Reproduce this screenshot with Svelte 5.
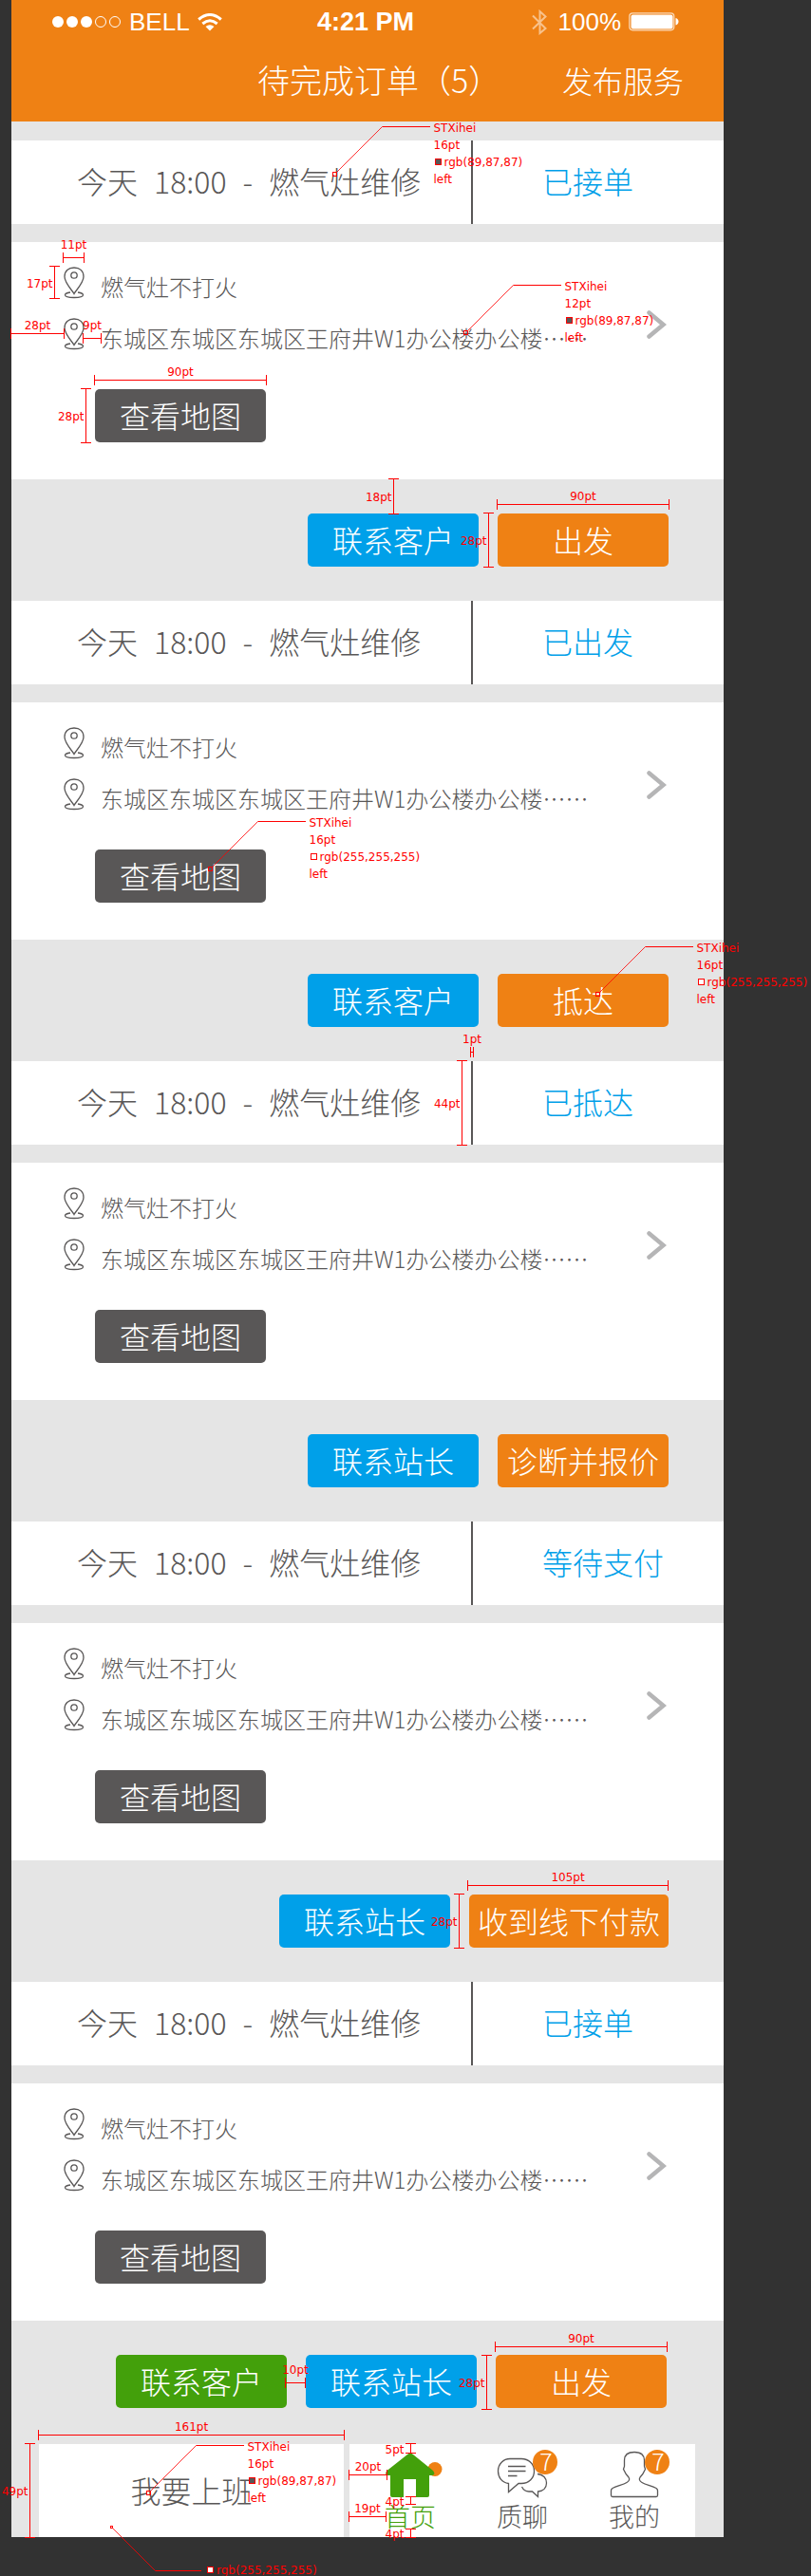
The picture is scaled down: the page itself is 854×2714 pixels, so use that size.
<script>
  const orders = [
    { status: '已接单', actions: [['联系客户', 'blue'], ['出发', 'orange']] },
    { status: '已出发', actions: [['联系客户', 'blue'], ['抵达', 'orange']] },
    { status: '已抵达', actions: [['联系站长', 'blue'], ['诊断并报价', 'orange']] },
    { status: '等待支付', actions: [['联系站长', 'blue'], ['收到线下付款', 'orange wide']] },
    { status: '已接单', actions: [['联系客户', 'green'], ['联系站长', 'blue'], ['出发', 'orange']] }
  ];

  // Horizontal dimensions: start x, end x, y, label
  const spans = [
    [66.5, 88.5, 271.5, '11pt'],
    [11.5, 67.5, 351.5, '28pt'],
    [87.5, 106.5, 356.5, '9pt'],
    [99.5, 280.5, 400.5, '90pt'],
    [523.5, 704.5, 531.5, '90pt'],
    [495.5, 498.5, 1108.5, '1pt'],
    [492.5, 703.5, 1986.5, '105pt'],
    [300.5, 321.5, 2510.5, '10pt'],
    [521.5, 702.5, 2472.5, '90pt'],
    [40.5, 362.5, 2565.5, '161pt'],
    [367.5, 407.5, 2607.5, '20pt'],
    [367.5, 406.5, 2651.5, '19pt']
  ];

  // Vertical dimensions: x, start y, end y, label
  const heights = [
    [57.5, 280.5, 314.5, '17pt'],
    [90.5, 409.5, 466.5, '28pt'],
    [414.5, 504.5, 541.5, '18pt'],
    [514.5, 540.5, 597.5, '28pt'],
    [486.5, 1117.5, 1206.5, '44pt'],
    [483.5, 1995.5, 2052.5, '28pt'],
    [512.5, 2481.5, 2538.5, '28pt'],
    [31.5, 2574.5, 2673.5, '49pt'],
    [432.5, 2574.5, 2584.5, '5pt'],
    [432.5, 2630.5, 2638.5, '4pt'],
    [432.5, 2664.5, 2673.5, '4pt']
  ];

  // Type notes: elbow x, elbow y, size, swatch values
  const notes = [
    [402.5, 133.5, '16pt', '89,87,87'],
    [540.5, 300.5, '12pt', '89,87,87'],
    [271.5, 865.5, '16pt', '255,255,255'],
    [679.5, 997.5, '16pt', '255,255,255'],
    [206.5, 2576.5, '16pt', '89,87,87']
  ];
</script>

{#snippet pin()}
  <svg class="pin" width="22" height="34" viewBox="0 0 22 34" aria-hidden="true">
    <path d="M11 28.500C9.500 25.500 1 17 1 10.500C1 4.500 5 1 11 1S21 4.500 21 10.500C21 17 12.500 25.500 11 28.500Z" />
    <circle cx="11" cy="9" r="3.200" />
    <path d="M7 27C4 27.500 1.500 28.500 1.500 29.800C1.500 31.500 5.500 32.500 11 32.500S20.500 31.500 20.500 29.800C20.500 28.500 18 27.500 15 27" />
  </svg>
{/snippet}

<div class="board" lang="zh-CN">
  <main class="phone">
    <header>
      <div class="statusbar">
        <div class="carrier">
          <svg width="73" height="14" viewBox="0 0 73 14" aria-hidden="true">
            <circle cx="6" cy="7" r="6" fill="#fff" />
            <circle cx="21" cy="7" r="6" fill="#fff" />
            <circle cx="36" cy="7" r="6" fill="#fff" />
            <circle cx="51" cy="7" r="5.500" fill="none" stroke="#fff" />
            <circle cx="66" cy="7" r="5.500" fill="none" stroke="#fff" />
          </svg>
          <span>BELL</span>
          <svg width="26" height="19" viewBox="0 0 26 19" fill="none" stroke="#fff" stroke-width="3" aria-hidden="true">
            <path d="M1.200 6.500Q13 -3.500 24.800 6.500" />
            <path d="M5.300 11Q13 4.500 20.700 11" />
            <path d="M13 18.500L8.500 14Q13 10.500 17.500 14Z" fill="#fff" stroke="none" />
          </svg>
        </div>
        <strong>4:21 PM</strong>
        <div class="power">
          <svg width="16" height="27" viewBox="0 0 16 27" fill="none" stroke="#f8c28c" stroke-width="2" aria-hidden="true">
            <path d="M1 6.500L14.500 20L8.500 25V2L14.500 7.500L1 20.500" />
          </svg>
          <span>100%</span>
          <svg width="53" height="20" viewBox="0 0 53 20" aria-hidden="true">
            <rect x="0.800" y="0.800" width="47" height="18" rx="3.500" fill="none" stroke="#fbdcbd" stroke-width="1.200" />
            <rect x="2.500" y="2.500" width="44" height="15" rx="2" fill="#fff" />
            <path d="M49.500 6Q52.500 7 52.500 9.800T49.500 13.500Z" fill="#fff" />
          </svg>
        </div>
      </div>
      <div class="titlebar">
        <h1>待完成订单（5）</h1>
        <a href="#publish">发布服务</a>
      </div>
    </header>

    {#each orders as order}
      <article>
        <div class="head">
          <h2><span>今天</span><span>18:00</span><span>-</span><span>燃气灶维修</span></h2>
          <p>{order.status}</p>
        </div>
        <div class="card">
          <div class="details">
            <p>{@render pin()}<span>燃气灶不打火</span></p>
            <p>{@render pin()}<span>东城区东城区东城区王府井W1办公楼办公楼……</span></p>
            <button class="dark">查看地图</button>
          </div>
          <a class="more" href="#detail" aria-label="订单详情">
            <svg width="21" height="30" viewBox="0 0 21 30" aria-hidden="true">
              <path d="M2.500 2.500L17.500 15L2.500 27.500" fill="none" stroke="#b5b5b6" stroke-width="4.500" stroke-linecap="round" />
            </svg>
          </a>
        </div>
        <div class="actions" class:triple={order.actions.length === 3}>
          {#each order.actions as [label, tone]}
            <button class={tone}>{label}</button>
          {/each}
        </div>
      </article>
    {/each}

    <footer>
      <button class="shift">我要上班</button>
      <nav>
        <a class="current" href="#home">
          <svg width="80" height="60" viewBox="0 0 80 60" aria-hidden="true">
            <circle cx="66" cy="26.500" r="7.500" fill="#ef8114" />
            <path d="M37 11Q40 8.500 43 11L64 28Q67 32 63.500 33H60V54Q60 56 58 56H46V37H33V56H21Q19 56 19 54V33H16Q12.500 32 15.500 28Z" fill="#43a00b" />
          </svg>
          <span>首页</span>
        </a>
        <a href="#chat">
          <svg class="line" width="80" height="60" viewBox="0 0 80 60" aria-hidden="true">
            <path d="M27 15.500H39C47 15.500 52.500 21 52.500 28.500C52.500 36 47 41.500 39 41.500H36L25.500 50.500V41.500C18.500 40.500 14.500 35 14.500 28.500C14.500 21 20 15.500 27 15.500Z" />
            <path d="M25 23.500H43.500M25 28.500H43.500M25 33.500H34.500" />
            <path d="M56 31.500C62 32 65.500 36 65.500 41C65.500 46 62 49.500 56.500 50V55.500L50.500 50H47C43 50 41 48 39.500 45" />
            <circle class="badge" cx="64" cy="19" r="13" />
            <text x="65" y="28">7</text>
          </svg>
          <span>质聊</span>
        </a>
        <a href="#me">
          <svg class="line" width="80" height="60" viewBox="0 0 80 60" aria-hidden="true">
            <path d="M40 8.500C32 8.500 29.500 12 29.500 17V23.500L28.500 26.500C30 30 31 32 34 35Q36 38 32 40.500C28 43 22 44 17 46.500Q15.500 47.500 15.500 49V54Q15.500 55.500 17 55.500H63Q64.500 55.500 64.500 54V49Q64.500 47.500 63 46.500C58 44 52 43 48 40.500Q44 38 46 35C49 32 50 30 51.500 26.500L50.500 23.500V17C50.500 12 48 8.500 40 8.500Z" />
            <circle class="badge" cx="64" cy="19" r="13" />
            <text x="65" y="28">7</text>
          </svg>
          <span>我的</span>
        </a>
      </nav>
    </footer>
  </main>

  <svg class="specs">
    {#each spans as [x1, x2, y, label]}
      <path d="M{x1} {y}H{x2}M{x1} {y - 5.5}v11M{x2} {y - 5.5}v11" />
      <text x={(x1 + x2) / 2} y={y - (x2 - x1 < 25 ? 9.5 : 4.5)} text-anchor="middle">{label}</text>
    {/each}
    {#each heights as [x, y1, y2, label]}
      <path d="M{x} {y1}V{y2}M{x - 5.5} {y1}h11M{x - 5.5} {y2}h11" />
      <text x={x - (y2 - y1 < 25 ? 7 : 2)} y={(y1 + y2) / 2 + 5} text-anchor="end">{label}</text>
    {/each}
    {#each notes as [x, y, size, rgb]}
      <path d="M{x} {y}h50.5" />
      <path class="leader" d="M{x} {y}l-48 48" />
      <rect x={x - 52} y={y + 48} width="4" height="4" />
      <text x={x + 54} y={y + 5.5}>STXihei</text>
      <text x={x + 54} y={y + 23.5}>{size}</text>
      <rect x={x + 56} y={y + 34} width="6" height="6" fill="rgb({rgb})" />
      <text x={x + 65} y={y + 41.5}>rgb({rgb})</text>
      <text x={x + 54} y={y + 59.5}>left</text>
    {/each}
    <path d="M163.500 2708.500H212" />
    <path class="leader" d="M163.500 2708.500L118.500 2663.500" />
    <rect x="116.500" y="2661.500" width="2" height="2" />
    <rect x="218.500" y="2704.500" width="6" height="6" fill="#fff" />
    <text x="228" y="2712">rgb(255,255,255)</text>
  </svg>
</div>

<style>
  :global(body) {
    margin: 0;
    background: #323232;
  }
  .board {
    position: relative;
    padding: 0 92px 41px 12px;
    overflow: hidden;
    font-family: 'Noto Sans CJK SC', sans-serif;
    font-weight: 300;
    color: #595757;
  }
  .phone {
    background: #e5e5e5;
  }
  h1, h2, p {
    margin: 0;
    font-weight: 300;
  }
  a {
    color: inherit;
    text-decoration: none;
  }
  svg {
    display: block;
    flex: none;
  }
  header {
    height: 128px;
    margin-bottom: 20px;
    background: #ef8114;
    color: #fff;
  }
  .statusbar {
    display: grid;
    grid-template-columns: 1fr auto 1fr;
    align-items: center;
    height: 46px;
    padding: 0 47px 0 43px;
    font: 400 26px/46px 'Liberation Sans', Arial, sans-serif;
  }
  .statusbar strong {
    font-size: 27px;
  }
  .carrier, .power {
    display: flex;
    align-items: center;
    gap: 8px;
  }
  .power {
    justify-content: flex-end;
  }
  .power span {
    padding-left: 4px;
  }
  .titlebar {
    display: flex;
    justify-content: space-between;
    padding: 0 42px 0 259px;
    line-height: 76px;
    font-size: 32px;
  }
  h1 {
    font-size: 34px;
  }
  .head {
    display: grid;
    grid-template-columns: minmax(0, 486fr) minmax(0, 264fr);
    height: 88px;
    margin-bottom: 19px;
    background: #fff;
    font-size: 32px;
    line-height: 84px;
    white-space: nowrap;
  }
  h2 {
    display: flex;
    gap: 17px;
    padding-left: 69px;
    font-size: 32px;
    border-right: 2px solid #595757;
  }
  .head p {
    padding-left: 73px;
    color: #00a0e9;
  }
  .card {
    display: flex;
    justify-content: space-between;
    padding: 26px 60px 39px 55px;
    background: #fff;
  }
  .details p {
    display: flex;
    gap: 17px;
    height: 54px;
    font-size: 24px;
    line-height: 42px;
    white-space: nowrap;
  }
  .pin {
    fill: none;
    stroke: #595757;
    stroke-width: 1.300;
  }
  .more {
    padding-top: 46px;
  }
  button {
    display: block;
    width: 180px;
    height: 56px;
    padding: 0 0 2px;
    border: 0;
    border-radius: 5px;
    color: #fff;
    font: inherit;
    font-size: 32px;
    line-height: 54px;
    white-space: nowrap;
  }
  .dark {
    margin: 21px 0 0 33px;
    background: #595757;
  }
  .actions {
    display: flex;
    justify-content: flex-end;
    gap: 20px;
    padding: 36px 58px 36px 0;
  }
  .triple {
    padding-right: 60px;
  }
  .blue {
    background: #00a0e9;
  }
  .orange {
    background: #ef8114;
  }
  .green {
    background: #43a00b;
  }
  .wide {
    width: 210px;
  }
  footer {
    display: grid;
    grid-template-columns: minmax(0, 321fr) minmax(0, 364fr);
    gap: 6px;
    padding: 2px 30px 0 29px;
  }
  .shift {
    width: auto;
    height: 98px;
    border-radius: 0;
    background: #fff;
    color: #595757;
  }
  nav {
    display: flex;
    justify-content: center;
    background: #fff;
  }
  nav a {
    display: flex;
    flex-direction: column;
    align-items: center;
    width: 118px;
    font-size: 27px;
    line-height: 32px;
  }
  .current {
    color: #43a00b;
  }
  .line {
    fill: none;
    stroke: #595757;
    stroke-width: 1.300;
  }
  .line .badge {
    fill: #ef8114;
    stroke: none;
  }
  .line text {
    fill: #fff;
    stroke: none;
    font-size: 25px;
    text-anchor: middle;
  }
  .specs {
    position: absolute;
    top: 0;
    left: 0;
    width: 100%;
    height: 100%;
    pointer-events: none;
  }
  .specs path {
    fill: none;
    stroke: #f00;
  }
  .specs .leader {
    stroke-width: 0.800;
  }
  .specs rect {
    stroke: #f00;
  }
  .specs rect:not([fill]) {
    fill: none;
  }
  .specs text {
    fill: #f00;
    font: 400 12px 'DejaVu Sans', Verdana, sans-serif;
  }
</style>
